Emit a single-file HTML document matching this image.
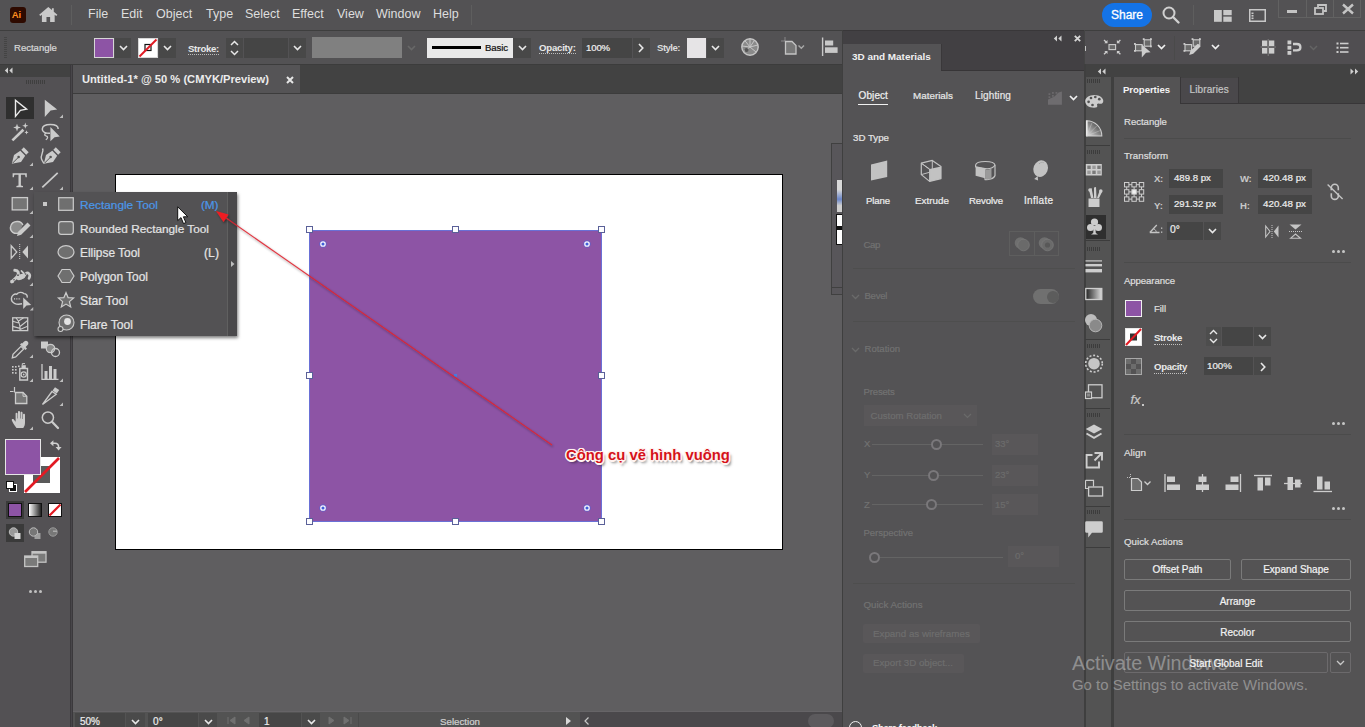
<!DOCTYPE html>
<html>
<head>
<meta charset="utf-8">
<title>Illustrator</title>
<style>
*{box-sizing:border-box;margin:0;padding:0}
html,body{width:1365px;height:727px;overflow:hidden;background:#535353}
body{font-family:"Liberation Sans",sans-serif;font-size:10px;color:#dcdcdc;position:relative}
.a{position:absolute}
.t{position:absolute;white-space:nowrap;line-height:16px;height:16px;-webkit-text-stroke:0.22px currentColor}
svg{position:absolute;overflow:visible}
.dd{position:absolute;background:#484848}
.inp{position:absolute;background:#454545}
</style>
</head>
<body>
<!-- p00_base -->
<div class="a" style="left:0px;top:0px;width:1365px;height:30px;background:#535254;"></div>
<div class="a" style="left:0px;top:30px;width:1365px;height:1px;background:#3e3e3e;"></div>
<div class="a" style="left:0px;top:31px;width:1365px;height:33px;background:#535254;"></div>
<div class="a" style="left:0px;top:64px;width:1365px;height:1.3px;background:#3c3c3c;"></div>
<div class="a" style="left:73px;top:94px;width:770px;height:619px;background:#5f5e60;"></div>
<div class="a" style="left:71px;top:65px;width:772px;height:28px;background:#424242;"></div>
<div class="a" style="left:73px;top:65.3px;width:227px;height:27.7px;background:#555456;"></div>
<div class="a" style="left:73px;top:93px;width:770px;height:1px;background:#3c3c3c;"></div>
<div class="a" style="left:115px;top:174px;width:668px;height:376px;background:#fff;border:1px solid #000"></div>
<!-- p10_menu -->
<div class="a" style="left:9.5px;top:6.5px;width:16px;height:16px;background:#2e0a00;border-radius:3px"></div>
<div class="t" style="left:11.8px;top:6.7px;font-size:9.5px;color:#ff8f1f;font-weight:bold;-webkit-text-stroke:0;letter-spacing:-0.2px;">Ai</div>
<svg style="left:38.7px;top:7.4px" width="18.6" height="15.5" viewBox="0 0 20 17"><path d="M10 0 L0 8.6 L1.3 10 L3 8.6 V16.5 H8 V11 H12 V16.5 H17 V8.6 L18.7 10 L20 8.6 L16 5.1 V1.5 H14 V3.4 Z" fill="#c9c9c9"/></svg>
<div class="a" style="left:71px;top:5px;width:1px;height:20px;background:#5e5e5e;"></div>
<div class="t" style="left:88px;top:6.0px;font-size:12.5px;color:#dedede;-webkit-text-stroke:0;">File</div>
<div class="t" style="left:121px;top:6.0px;font-size:12.5px;color:#dedede;-webkit-text-stroke:0;">Edit</div>
<div class="t" style="left:156px;top:6.0px;font-size:12.5px;color:#dedede;-webkit-text-stroke:0;">Object</div>
<div class="t" style="left:206px;top:6.0px;font-size:12.5px;color:#dedede;-webkit-text-stroke:0;">Type</div>
<div class="t" style="left:245px;top:6.0px;font-size:12.5px;color:#dedede;-webkit-text-stroke:0;">Select</div>
<div class="t" style="left:292px;top:6.0px;font-size:12.5px;color:#dedede;-webkit-text-stroke:0;">Effect</div>
<div class="t" style="left:337px;top:6.0px;font-size:12.5px;color:#dedede;-webkit-text-stroke:0;">View</div>
<div class="t" style="left:376px;top:6.0px;font-size:12.5px;color:#dedede;-webkit-text-stroke:0;">Window</div>
<div class="t" style="left:433px;top:6.0px;font-size:12.5px;color:#dedede;-webkit-text-stroke:0;">Help</div>
<div class="a" style="left:471px;top:5px;width:1px;height:20px;background:#5e5e5e;"></div>
<div class="a" style="left:1102px;top:3px;width:50px;height:24px;background:#1473e6;border-radius:12px"></div>
<div class="t" style="left:1102px;width:50px;text-align:center;top:7.0px;font-size:12px;color:#fff;-webkit-text-stroke:0.3px #fff;">Share</div>
<svg style="left:1162px;top:6px" width="18" height="18" viewBox="0 0 18 18"><circle cx="7" cy="7" r="5.5" fill="none" stroke="#d0d0d0" stroke-width="2"/><path d="M11 11 L16.5 16.5" stroke="#d0d0d0" stroke-width="2.4" stroke-linecap="round"/></svg>
<div class="a" style="left:1193px;top:5px;width:1px;height:20px;background:#5e5e5e;"></div>
<svg style="left:1213.7px;top:9.5px" width="18" height="12" viewBox="0 0 18 12"><rect x="0" y="0" width="7.8" height="11.8" fill="#c8c8c8"/><rect x="9.3" y="0" width="8.4" height="5.2" fill="#c8c8c8"/><rect x="9.3" y="6.6" width="8.4" height="5.2" fill="#c8c8c8"/></svg>
<svg style="left:1249px;top:9px" width="17" height="13" viewBox="0 0 17 13"><rect x="0.75" y="0.75" width="15.5" height="11.5" fill="none" stroke="#c8c8c8" stroke-width="1.5"/><rect x="2.5" y="3.5" width="2" height="1.6" fill="#c8c8c8"/><rect x="2.5" y="6" width="2" height="1.6" fill="#c8c8c8"/><rect x="2.5" y="8.5" width="2" height="1.6" fill="#c8c8c8"/></svg>
<div class="a" style="left:1278px;top:0px;width:83px;height:18px;background:transparent;border:1px solid #626262;border-top:none"></div>
<div class="a" style="left:1306px;top:0px;width:1px;height:18px;background:#626262;"></div>
<div class="a" style="left:1333px;top:0px;width:1px;height:18px;background:#626262;"></div>
<div class="a" style="left:1287px;top:10px;width:10px;height:3px;background:#c4c4c4;"></div>
<svg style="left:1314px;top:4px" width="13" height="11" viewBox="0 0 13 11"><path d="M4 3 V1 H12 V7 H9.5" fill="none" stroke="#c4c4c4" stroke-width="1.8"/><rect x="1" y="4" width="8" height="6" fill="none" stroke="#c4c4c4" stroke-width="1.8"/></svg>
<svg style="left:1342px;top:4px" width="12" height="10" viewBox="0 0 12 10"><path d="M1 0.5 L11 9.5 M11 0.5 L1 9.5" stroke="#c4c4c4" stroke-width="2.4"/></svg>
<!-- p20_ctrl -->
<div class="a" style="left:4px;top:37px;width:3px;height:22px;background:repeating-linear-gradient(to bottom,#444 0,#444 1px,transparent 1px,transparent 2px);"></div>
<div class="t" style="left:14px;top:40.0px;font-size:9.6px;color:#d8d8d8;letter-spacing:-0.03px;">Rectangle</div>
<div class="a" style="left:94px;top:38px;width:20px;height:20px;background:#8d54a5;border:1px solid #d6d6d6"></div>
<div class="dd" style="left:115px;top:38px;width:16px;height:20px"></div><svg style="left:119px;top:45px" width="9" height="6" viewBox="0 0 9 6"><path d="M1 1 L4.5 4.5 L8 1" fill="none" stroke="#e8e8e8" stroke-width="1.6"/></svg>
<div class="a" style="left:138px;top:38px;width:20px;height:20px;background:#fff;border:1px solid #d6d6d6"></div>
<svg style="left:138px;top:38px" width="20" height="20" viewBox="0 0 20 20"><rect x="7" y="6.5" width="6" height="6" fill="none" stroke="#111" stroke-width="1.2"/><path d="M1.5 18.5 L18.5 1.5" stroke="#e01b24" stroke-width="2"/></svg>
<div class="dd" style="left:159px;top:38px;width:17px;height:20px"></div><svg style="left:163px;top:45px" width="9" height="6" viewBox="0 0 9 6"><path d="M1 1 L4.5 4.5 L8 1" fill="none" stroke="#e8e8e8" stroke-width="1.6"/></svg>
<div class="t" style="left:188px;top:40.8px;font-size:9.6px;color:#e8e8e8;font-weight:bold;-webkit-text-stroke:0;letter-spacing:-0.30px;border-bottom:1px dotted #bbb;height:14px;line-height:15px;">Stroke:</div>
<div class="dd" style="left:226px;top:38px;width:17px;height:20px"></div><svg style="left:230px;top:40px" width="9" height="16" viewBox="0 0 9 16"><path d="M1 5 L4.5 1.5 L8 5 M1 11 L4.5 14.5 L8 11" fill="none" stroke="#e8e8e8" stroke-width="1.5"/></svg>
<div class="inp" style="left:244px;top:38px;width:44px;height:20px"></div><div class="dd" style="left:289px;top:38px;width:17px;height:20px"></div><svg style="left:293px;top:45px" width="9" height="6" viewBox="0 0 9 6"><path d="M1 1 L4.5 4.5 L8 1" fill="none" stroke="#e8e8e8" stroke-width="1.6"/></svg>
<div class="a" style="left:312px;top:37px;width:90px;height:21px;background:#808080;"></div>
<svg style="left:407px;top:45px" width="9" height="6" viewBox="0 0 9 6"><path d="M1 1 L4.5 4.5 L8 1" fill="none" stroke="#686868" stroke-width="1.6"/></svg>
<div class="a" style="left:427px;top:38px;width:86px;height:20px;background:#e9e9e9;"></div>
<div class="a" style="left:432px;top:46px;width:49px;height:3px;background:#000;"></div>
<div class="t" style="left:485px;top:40.0px;font-size:9.6px;color:#111;letter-spacing:-0.10px;">Basic</div>
<div class="dd" style="left:513px;top:38px;width:18px;height:20px"></div><svg style="left:518px;top:45px" width="9" height="6" viewBox="0 0 9 6"><path d="M1 1 L4.5 4.5 L8 1" fill="none" stroke="#e8e8e8" stroke-width="1.6"/></svg>
<div class="t" style="left:539px;top:40.3px;font-size:9.6px;color:#e8e8e8;font-weight:bold;-webkit-text-stroke:0;letter-spacing:-0.21px;border-bottom:1px dotted #bbb;height:14px;line-height:15px;">Opacity:</div>
<div class="inp" style="left:582px;top:38px;width:50px;height:20px"></div><div class="t" style="left:586px;top:39.5px;font-size:9.6px;color:#f0f0f0;letter-spacing:-0.14px;">100%</div>
<div class="dd" style="left:633px;top:38px;width:17px;height:20px"></div><svg style="left:638px;top:43px" width="6" height="10" viewBox="0 0 6 10"><path d="M1 1 L4.8 5 L1 9" fill="none" stroke="#e8e8e8" stroke-width="1.6"/></svg>
<div class="t" style="left:657px;top:39.5px;font-size:9.6px;color:#dcdcdc;font-weight:bold;-webkit-text-stroke:0;letter-spacing:-0.52px;">Style:</div>
<div class="a" style="left:687px;top:38px;width:19px;height:20px;background:#e6e4e6;"></div>
<div class="dd" style="left:707px;top:38px;width:17px;height:20px"></div><svg style="left:711px;top:45px" width="9" height="6" viewBox="0 0 9 6"><path d="M1 1 L4.5 4.5 L8 1" fill="none" stroke="#e8e8e8" stroke-width="1.6"/></svg>
<svg style="left:741px;top:38px" width="18" height="18" viewBox="0 0 18 18"><circle cx="9" cy="9" r="8.2" fill="#8a8a8a" stroke="#c6c6c6" stroke-width="1.4"/><path d="M9 1 L9 9 L2.5 13.5 M9 9 L15 14 M9 9 L16.8 7 M9 9 L13.5 2.3 M9 9 L4 2.8 M9 9 L1 8" stroke="#c6c6c6" stroke-width="1" fill="none"/><circle cx="5.5" cy="12" r="2" fill="#555"/></svg>
<svg style="left:781px;top:37px" width="30" height="20" viewBox="0 0 30 20"><path d="M4 0.5 V4 M0.5 4 H4" stroke="#bdbdbd" stroke-width="1" stroke-dasharray="1 1" fill="none"/><path d="M4.5 4.5 H11 L15 8.5 V17 H4.5 Z" fill="#777" stroke="#c4c4c4" stroke-width="1.3"/><path d="M17.5 8.5 L20.3 11.3 L23 8.5" fill="none" stroke="#a8a8a8" stroke-width="1.4"/></svg>
<svg style="left:821px;top:37px" width="18" height="22" viewBox="0 0 18 22"><path d="M1.6 0.5 V19" stroke="#c8c8c8" stroke-width="1.4"/><rect x="4" y="3.5" width="8.2" height="5" fill="#c8c8c8"/><rect x="4" y="10.3" width="12.6" height="5.6" fill="#c8c8c8"/></svg>
<!-- p30_canvas -->
<div class="t" style="left:82px;top:71.0px;font-size:11.16px;color:#ececec;font-weight:bold;-webkit-text-stroke:0;">Untitled-1* @ 50 % (CMYK/Preview)</div>
<svg style="left:286px;top:75.5px" width="8" height="8" viewBox="0 0 8 8"><path d="M1 1 L7 7 M7 1 L1 7" stroke="#e6e6e6" stroke-width="2"/></svg>
<div class="a" style="left:309px;top:229.5px;width:292.5px;height:292.3px;background:#8d54a5;border:1px solid #6a70d6"></div>
<div class="a" style="left:305.7px;top:226.2px;width:7px;height:7px;background:#fdfdff;border:1px solid #5a6098"></div>
<div class="a" style="left:305.7px;top:372.2px;width:7px;height:7px;background:#fdfdff;border:1px solid #5a6098"></div>
<div class="a" style="left:305.7px;top:518.2px;width:7px;height:7px;background:#fdfdff;border:1px solid #5a6098"></div>
<div class="a" style="left:452.2px;top:226.2px;width:7px;height:7px;background:#fdfdff;border:1px solid #5a6098"></div>
<div class="a" style="left:452.2px;top:518.2px;width:7px;height:7px;background:#fdfdff;border:1px solid #5a6098"></div>
<div class="a" style="left:598.2px;top:226.2px;width:7px;height:7px;background:#fdfdff;border:1px solid #5a6098"></div>
<div class="a" style="left:598.2px;top:372.2px;width:7px;height:7px;background:#fdfdff;border:1px solid #5a6098"></div>
<div class="a" style="left:598.2px;top:518.2px;width:7px;height:7px;background:#fdfdff;border:1px solid #5a6098"></div>
<div class="a" style="left:454px;top:374px;width:3px;height:3px;background:#4a7be0;"></div>
<svg style="left:319px;top:240px" width="8" height="8" viewBox="0 0 8 8"><circle cx="4" cy="4" r="3.3" fill="none" stroke="#4f63d8" stroke-width="0.7"/><circle cx="4" cy="4" r="2.2" fill="#3f5fd8" stroke="#f4f4ff" stroke-width="1.3"/></svg>
<svg style="left:582.5px;top:240px" width="8" height="8" viewBox="0 0 8 8"><circle cx="4" cy="4" r="3.3" fill="none" stroke="#4f63d8" stroke-width="0.7"/><circle cx="4" cy="4" r="2.2" fill="#3f5fd8" stroke="#f4f4ff" stroke-width="1.3"/></svg>
<svg style="left:319px;top:503.5px" width="8" height="8" viewBox="0 0 8 8"><circle cx="4" cy="4" r="3.3" fill="none" stroke="#4f63d8" stroke-width="0.7"/><circle cx="4" cy="4" r="2.2" fill="#3f5fd8" stroke="#f4f4ff" stroke-width="1.3"/></svg>
<svg style="left:582.5px;top:503.5px" width="8" height="8" viewBox="0 0 8 8"><circle cx="4" cy="4" r="3.3" fill="none" stroke="#4f63d8" stroke-width="0.7"/><circle cx="4" cy="4" r="2.2" fill="#3f5fd8" stroke="#f4f4ff" stroke-width="1.3"/></svg>
<!-- p40_tools -->
<div class="a" style="left:0px;top:65px;width:70px;height:662px;background:#535154;"></div>
<div class="a" style="left:0px;top:65px;width:70px;height:12px;background:#424242;"></div>
<div class="a" style="left:70px;top:65px;width:1px;height:662px;background:#3b393c;"></div>
<div class="a" style="left:71px;top:65px;width:1px;height:662px;background:#48464a;"></div>
<div class="a" style="left:72px;top:65px;width:1px;height:662px;background:#3b393c;"></div>
<svg style="left:4.2px;top:67.3px" width="9" height="7" viewBox="0 0 9 7"><path d="M4 0.5 L0.8 3.5 L4 6.5 Z M8.5 0.5 L5.3 3.5 L8.5 6.5 Z" fill="#d0d0d0"/></svg>
<div class="a" style="left:26px;top:80px;width:20px;height:4px;background:repeating-linear-gradient(to right,#3f3f3f 0,#3f3f3f 1px,transparent 1px,transparent 2px);"></div>
<div class="a" style="left:6px;top:97px;width:28px;height:22px;background:#2f2f2f;"></div>
<svg style="left:0px;top:0px" width="72" height="727" viewBox="0 0 72 727"><path d="M15.5 100.3 L26.6 109.2 L20.4 110.4 L15.5 116.4 Z" fill="none" stroke="#ececec" stroke-width="1.4" stroke-linejoin="miter"/><path d="M44.8 99.8 L57.2 109.6 L50.6 110.6 L44.8 117 Z" fill="#cbcbcb"/><path d="M63.0 114.5 V118.0 H59.5 Z" fill="#bdbdbd"/><path d="M12.4 140.4 L23.4 129.8" stroke="#cbcbcb" stroke-width="2.6"/><path d="M17 123.8 L18 126.6 L20.8 127.6 L18 128.6 L17 131.4 L16 128.6 L13.2 127.6 L16 126.6 Z" fill="#cbcbcb"/><path d="M25.3 122.6 L26.1 124.9 L28.4 125.7 L26.1 126.5 L25.3 128.8 L24.5 126.5 L22.2 125.7 L24.5 124.9 Z" fill="#cbcbcb"/><path d="M26.5 130.3 L27.1 131.8 L28.6 132.4 L27.1 133 L26.5 134.5 L25.9 133 L24.4 132.4 L25.9 131.8 Z" fill="#cbcbcb"/><path d="M50 133.2 C45.5 133.6 42 131.8 42.3 129 C42.6 126 46 124.6 50.3 124.6 C55 124.6 58.2 126.3 58.2 129" fill="none" stroke="#cbcbcb" stroke-width="1.5"/><path d="M46.5 132.8 C44.5 133.3 44 135.3 46 135.8 C48.3 136.3 48 138.5 45.8 139.8" fill="none" stroke="#cbcbcb" stroke-width="1.3"/><path d="M50.4 127 L59.8 136.6 L54.6 137.2 L50.4 141.2 Z" fill="#cbcbcb"/><path d="M11.8 163.8 L14 155 L20.3 150.8 L25.2 155.7 L21 162 Z" fill="#cbcbcb"/><path d="M21.3 149.8 L23.8 147.3 L28.7 152.2 L26.2 154.7 Z" fill="#cbcbcb"/><path d="M12.5 163.2 L18 157.7" stroke="#535353" stroke-width="1"/><circle cx="18.6" cy="157" r="1.3" fill="#535353"/><path d="M33.0 162.5 V166.0 H29.5 Z" fill="#bdbdbd"/><path d="M43.8 163.8 L46 155 L52.3 150.8 L57.2 155.7 L53 162 Z" fill="#cbcbcb"/><path d="M53.3 149.8 L55.8 147.3 L60.7 152.2 L58.2 154.7 Z" fill="#cbcbcb"/><path d="M44.5 163.2 L50 157.7" stroke="#535353" stroke-width="1"/><circle cx="50.6" cy="157" r="1.3" fill="#535353"/><path d="M42.5 148.5 C44.5 151 40 155 41.5 159 C42.2 161 43.5 162.5 44 163.5" fill="none" stroke="#cbcbcb" stroke-width="1.4"/><path d="M12.6 173.2 H26.8 V177.2 H25.6 L25 174.8 H20.9 V185.4 L23 186 V187.2 H16.4 V186 L18.5 185.4 V174.8 H14.4 L13.8 177.2 H12.6 Z" fill="#cbcbcb"/><path d="M33.0 186.5 V190.0 H29.5 Z" fill="#bdbdbd"/><path d="M42.3 187.3 L57.7 172.9" stroke="#cbcbcb" stroke-width="1.7"/><path d="M63.0 186.5 V190.0 H59.5 Z" fill="#bdbdbd"/><rect x="12.2" y="197.6" width="15.3" height="12.3" fill="#757575" stroke="#cbcbcb" stroke-width="1.3"/><path d="M33.0 210.5 V214.0 H29.5 Z" fill="#bdbdbd"/><path d="M19 233 C14 234.5 10.2 231.5 10.4 227.5 C10.6 223.5 14 221.3 17.5 221.5 C20.5 221.7 22.3 223.2 22.8 225" fill="#8b8b8b" stroke="#cbcbcb" stroke-width="1.4"/><path d="M17 236 L18.2 231.8 L27.5 222.5 L30.5 225.5 L21.2 234.8 Z" fill="#cbcbcb"/><path d="M33.0 234.5 V238.0 H29.5 Z" fill="#bdbdbd"/><path d="M11.2 245.8 L16.8 252 L11.2 258.2 Z" fill="none" stroke="#cbcbcb" stroke-width="1.3"/><path d="M19.7 244 V260" stroke="#cbcbcb" stroke-width="1" stroke-dasharray="1 1"/><path d="M28 245.5 L22.3 252 L28 258.5 Z" fill="#cbcbcb"/><path d="M33.0 258.5 V262.0 H29.5 Z" fill="#bdbdbd"/><path d="M14.8 270.3 C18.2 270.6 19.4 273.2 17.6 276 C16 278.5 13.6 279.6 11.8 281.8" fill="none" stroke="#cbcbcb" stroke-width="3" stroke-linecap="round"/><path d="M17.6 276.4 C20.5 279 23.6 278 24.8 275.2 C25.8 272.8 27.6 272.3 28.9 273.6 C30.3 275 29.9 276.8 29 278.3" fill="none" stroke="#cbcbcb" stroke-width="2.6" stroke-linecap="round"/><path d="M21.5 271 L23.5 273.2" stroke="#cbcbcb" stroke-width="1.8" stroke-linecap="round"/><ellipse cx="20.6" cy="277" rx="4.6" ry="2.7" transform="rotate(-22 20.6 277)" fill="#cbcbcb"/><rect x="10.6" y="280" width="3" height="3" fill="#cbcbcb"/><circle cx="18" cy="275.2" r="0.9" fill="#535154"/><circle cx="14" cy="279.8" r="0.8" fill="#535154"/><circle cx="25.6" cy="274" r="0.8" fill="#535154"/><path d="M33.0 282.5 V286.0 H29.5 Z" fill="#bdbdbd"/><path d="M22 303.8 C16 305.2 11.2 302.8 11.4 298.6 C11.6 295.4 14.2 293.6 16.8 294.2 C18 292 22 291.8 23.8 293.6 C26.2 293.6 27.6 295.4 27.2 297.6" fill="none" stroke="#cbcbcb" stroke-width="1.4"/><path d="M14 298.8 H21" stroke="#cbcbcb" stroke-width="1.3" stroke-dasharray="1.1 1.2"/><path d="M23.2 297.4 L31.2 304.9 L26.5 305.5 L23.2 309 Z" fill="#cbcbcb"/><path d="M33.3 307 V310.5 H29.8 Z" fill="#bdbdbd"/><rect x="12.7" y="317.8" width="15" height="12.8" fill="none" stroke="#cbcbcb" stroke-width="1.3"/><path d="M20 330.5 C20.3 325 19 321 16 317.8 M20 326.5 L27.6 320.5 M19.6 323.3 L12.7 321.3 M20 328.4 L12.7 326.4 M18.6 321 L23.5 317.8 M20 329.4 L27.6 326.2" fill="none" stroke="#cbcbcb" stroke-width="1.1"/><path d="M12.3 357.8 L13 354.3 L21 346.3 L23.7 349 L15.7 357 Z" fill="none" stroke="#cbcbcb" stroke-width="1.3"/><path d="M20 344.5 L25.5 350 L27 348.5 L25.6 347.1 L27.6 345 C28.6 344 28.6 342.5 27.6 341.5 C26.6 340.5 25.2 340.5 24.2 341.5 L22.1 343.6 L21.5 343 Z" fill="#cbcbcb"/><path d="M33.0 354.5 V358.0 H29.5 Z" fill="#bdbdbd"/><rect x="41" y="341.5" width="7" height="7" fill="#cbcbcb"/><circle cx="50.5" cy="348.5" r="4.2" fill="#8a8a8a" stroke="#cbcbcb" stroke-width="1.2"/><circle cx="55.5" cy="352.5" r="4" fill="none" stroke="#cbcbcb" stroke-width="1.3"/><path d="M19.8 368.5 H27.5 V380 H19.8 Z" fill="none" stroke="#cbcbcb" stroke-width="1.4"/><circle cx="23.7" cy="374.5" r="2.6" fill="none" stroke="#cbcbcb" stroke-width="1.2"/><circle cx="23.7" cy="374.5" r="0.9" fill="#cbcbcb"/><path d="M21.5 368 V365.2 H25.8 V368 Z" fill="#cbcbcb"/><path d="M22.3 365 V363.6 H25 " stroke="#cbcbcb" stroke-width="1" fill="none"/><rect x="12" y="366" width="1.6" height="1.6" fill="#cbcbcb"/><rect x="15" y="366" width="1.6" height="1.6" fill="#cbcbcb"/><rect x="18" y="365.5" width="1.6" height="1.6" fill="#cbcbcb"/><rect x="12" y="369" width="1.6" height="1.6" fill="#cbcbcb"/><rect x="15" y="369" width="1.6" height="1.6" fill="#cbcbcb"/><rect x="12" y="372" width="1.6" height="1.6" fill="#cbcbcb"/><rect x="15" y="372.2" width="1.6" height="1.6" fill="#cbcbcb"/><path d="M33.0 378.5 V382.0 H29.5 Z" fill="#bdbdbd"/><path d="M42 364 V379.3 H58.5" fill="none" stroke="#cbcbcb" stroke-width="1.3"/><rect x="44.5" y="371" width="3" height="8" fill="#cbcbcb"/><rect x="49" y="366" width="3" height="13" fill="#cbcbcb"/><rect x="53.5" y="369" width="3" height="10" fill="#cbcbcb"/><path d="M63.0 378.5 V382.0 H59.5 Z" fill="#bdbdbd"/><path d="M14.5 387 V392.5 M10 391.5 H13.5" stroke="#cbcbcb" stroke-width="1.2"/><path d="M15.5 392.5 H23 L26.8 396.3 V403.5 H15.5 Z" fill="#777" stroke="#cbcbcb" stroke-width="1.3"/><path d="M23 392.5 V396.3 H26.8" fill="none" stroke="#cbcbcb" stroke-width="1"/><path d="M42.5 404.5 L52 391.5 L56.2 394.3 Z" fill="none" stroke="#cbcbcb" stroke-width="1.3"/><path d="M52.6 390.6 L55 387.2 L59.2 390 L56.8 393.4 Z" fill="#cbcbcb"/><path d="M63.0 402.5 V406.0 H59.5 Z" fill="#bdbdbd"/><path d="M16.5 428 C14.5 425.5 12.5 422.5 11.8 420.2 C11.5 419 13 418.4 13.8 419.4 L15.6 421.8 V413.6 C15.6 412.3 17.4 412.3 17.5 413.6 V418.5 L18 418.5 V411.9 C18 410.6 19.9 410.6 20 411.9 V418.5 L20.5 418.5 V412.8 C20.5 411.5 22.4 411.5 22.5 412.8 V419 L23 419 V414.8 C23 413.5 24.9 413.5 25 414.8 V422.5 C25 425 24.3 426.5 23.3 428 Z" fill="#cbcbcb"/><path d="M33.0 426.5 V430.0 H29.5 Z" fill="#bdbdbd"/><circle cx="47.9" cy="417.6" r="5.6" fill="none" stroke="#cbcbcb" stroke-width="1.5"/><path d="M52 421.8 L58 428" stroke="#cbcbcb" stroke-width="2.3" stroke-linecap="round"/></svg>
<div class="a" style="left:24px;top:457px;width:36px;height:36px;background:#fff;border:1px solid #fff"></div>
<div class="a" style="left:33px;top:466px;width:17px;height:17px;background:#5a5a5a;"></div>
<svg style="left:24px;top:457px" width="36" height="36" viewBox="0 0 36 36"><path d="M1 35 L35 1" stroke="#e21a23" stroke-width="2.6"/></svg>
<div class="a" style="left:5px;top:439px;width:36px;height:36px;background:#8d54a5;border:1px solid #e6e6e6"></div>
<svg style="left:50px;top:440px" width="11" height="11" viewBox="0 0 11 11"><path d="M2 3.2 H5 C7.5 3.2 8.6 4.5 8.6 7" fill="none" stroke="#d0d0d0" stroke-width="1.6"/><path d="M0 3.2 L3.4 0.2 V6.2 Z M8.6 10.5 L5.6 7 H11.6 Z" fill="#d0d0d0"/></svg>
<div class="a" style="left:9px;top:484px;width:8px;height:8px;background:#111;border:1px solid #fff"></div>
<div class="a" style="left:6px;top:481px;width:8px;height:8px;background:#fff;border:1.5px solid #111"></div>
<div class="a" style="left:6px;top:501px;width:18px;height:18px;background:#3a3a3a;"></div>
<div class="a" style="left:8px;top:503px;width:14px;height:14px;background:#8d54a5;border:1px solid #111"></div>
<div class="a" style="left:28px;top:503px;width:14px;height:14px;background:linear-gradient(to right,#fff,#222);border:1px solid #111"></div>
<div class="a" style="left:48px;top:503px;width:14px;height:14px;background:#fff;border:1px solid #111"></div>
<svg style="left:48px;top:503px" width="14" height="14" viewBox="0 0 14 14"><path d="M1.5 12.5 L12.5 1.5" stroke="#e21a23" stroke-width="2.2"/></svg>
<div class="a" style="left:6px;top:524px;width:18px;height:18px;background:#3a3a3a;"></div>
<svg style="left:8px;top:526px" width="14" height="14" viewBox="0 0 14 14"><circle cx="5.5" cy="6" r="4.2" fill="#9a9a9a" stroke="#bdbdbd" stroke-width="1"/><rect x="6.5" y="7" width="6" height="6" fill="#d6d6d6"/></svg>
<svg style="left:28px;top:526px" width="14" height="14" viewBox="0 0 14 14"><rect x="6.5" y="7" width="6" height="6" fill="#9e9e9e"/><circle cx="5.5" cy="6" r="4.2" fill="#777" stroke="#bdbdbd" stroke-width="1"/></svg>
<svg style="left:47px;top:526px" width="14" height="14" viewBox="0 0 14 14"><circle cx="6" cy="6" r="4.2" fill="#777" stroke="#9a9a9a" stroke-width="1"/><path d="M6 6 h4 v-1.5 h-4z" fill="#aaa"/></svg>
<svg style="left:24px;top:551px" width="23" height="17" viewBox="0 0 23 17"><rect x="8" y="0.7" width="14" height="10.5" fill="#7a7a7a" stroke="#c4c4c4" stroke-width="1.3"/><rect x="8" y="0.7" width="14" height="2" fill="#c4c4c4"/><rect x="0.7" y="5" width="13" height="10.5" fill="#7a7a7a" stroke="#c4c4c4" stroke-width="1.3"/><rect x="0.7" y="5" width="13" height="2" fill="#c4c4c4"/></svg>
<div class="a" style="left:29px;top:590px;width:3px;height:3px;background:#c0c0c0;border-radius:50%"></div>
<div class="a" style="left:34px;top:590px;width:3px;height:3px;background:#c0c0c0;border-radius:50%"></div>
<div class="a" style="left:39px;top:590px;width:3px;height:3px;background:#c0c0c0;border-radius:50%"></div>
<!-- p50_flyout -->
<div class="a" style="left:34px;top:192px;width:203px;height:144px;background:#535254;box-shadow:1px 2px 3px rgba(0,0,0,.5)"></div>
<div class="a" style="left:227.5px;top:192px;width:9.5px;height:144px;background:#4a494b;"></div>
<div class="a" style="left:226.8px;top:192px;width:1px;height:144px;background:#606060;"></div>
<svg style="left:230.5px;top:261px" width="4" height="6" viewBox="0 0 4 6"><path d="M0 0 L3.5 3 L0 6 Z" fill="#bdbdbd"/></svg>
<div class="a" style="left:43px;top:202px;width:4px;height:4px;background:#c8c8c8;"></div>
<div class="t" style="left:80px;top:196.5px;font-size:11.82px;color:#4b97e8;">Rectangle Tool</div>
<div class="t" style="left:201px;top:196.5px;font-size:11.75px;color:#4b97e8;letter-spacing:-0.04px;">(M)</div>
<div class="t" style="left:80px;top:220.5px;font-size:11.8px;color:#e4e4e4;">Rounded Rectangle Tool</div>
<div class="t" style="left:80px;top:244.5px;font-size:11.9px;color:#e4e4e4;">Ellipse Tool</div>
<div class="t" style="left:204px;top:244.5px;font-size:12.15px;color:#e4e4e4;letter-spacing:0.05px;">(L)</div>
<div class="t" style="left:80px;top:268.5px;font-size:11.91px;color:#e4e4e4;">Polygon Tool</div>
<div class="t" style="left:80px;top:292.5px;font-size:12.15px;color:#e4e4e4;letter-spacing:0.03px;">Star Tool</div>
<div class="t" style="left:80px;top:316.5px;font-size:12.12px;color:#e4e4e4;">Flare Tool</div>
<svg style="left:0px;top:0px" width="240" height="340" viewBox="0 0 240 340"><rect x="58.7" y="197.7" width="14.6" height="12.6" fill="#6f6f6f" stroke="#cbcbcb" stroke-width="1.2"/><rect x="58.7" y="221.7" width="14.6" height="12.6" rx="2.5" fill="#6f6f6f" stroke="#cbcbcb" stroke-width="1.2"/><ellipse cx="66" cy="252" rx="8" ry="6.3" fill="#6f6f6f" stroke="#cbcbcb" stroke-width="1.2"/><path d="M58 276 L62 269.5 H70 L74 276 L70 282.5 H62 Z" fill="#6f6f6f" stroke="#cbcbcb" stroke-width="1.2"/><path d="M66 292.5 L68.1 297.6 L73.6 298 L69.4 301.6 L70.7 307 L66 304.1 L61.3 307 L62.6 301.6 L58.4 298 L63.9 297.6 Z" fill="#6f6f6f" stroke="#cbcbcb" stroke-width="1.2"/><circle cx="66.5" cy="322.5" r="7.5" fill="#6f6f6f" stroke="#cbcbcb" stroke-width="1.1"/><circle cx="67.5" cy="321.5" r="3.4" fill="#e4e4e4"/><circle cx="60.5" cy="329" r="2.5" fill="#535353" stroke="#cbcbcb" stroke-width="1.1"/></svg>
<!-- p60_status -->
<div class="a" style="left:73px;top:712px;width:770px;height:15px;background:#535353;"></div>
<div class="a" style="left:73px;top:711px;width:770px;height:1px;background:#666467;"></div>
<div class="a" style="left:580px;top:712px;width:263px;height:15px;background:#4a484b;"></div>
<div class="a" style="left:75px;top:713px;width:50px;height:14px;background:#464646;"></div>
<div class="t" style="left:80px;top:714.0px;font-size:9.99px;color:#ececec;">50%</div>
<div class="a" style="left:126px;top:713px;width:19px;height:14px;background:#4a4a4a;"></div>
<svg style="left:131px;top:719px" width="9" height="6" viewBox="0 0 9 6"><path d="M1 1 L4.5 4.5 L8 1" fill="none" stroke="#e8e8e8" stroke-width="1.6"/></svg>
<div class="a" style="left:148px;top:713px;width:50px;height:14px;background:#464646;"></div>
<div class="t" style="left:153px;top:714.0px;font-size:10.0px;color:#ececec;letter-spacing:0.22px;">0°</div>
<div class="a" style="left:199px;top:713px;width:18px;height:14px;background:#4a4a4a;"></div>
<svg style="left:203.5px;top:719px" width="9" height="6" viewBox="0 0 9 6"><path d="M1 1 L4.5 4.5 L8 1" fill="none" stroke="#e8e8e8" stroke-width="1.6"/></svg>
<svg style="left:227px;top:717px" width="24" height="8" viewBox="0 0 24 8"><path d="M1 0 V7 M8 0 L3 3.5 L8 7 Z M22 0 L17 3.5 L22 7 Z" fill="#707070" stroke="#707070" stroke-width="1"/></svg>
<div class="a" style="left:259px;top:713px;width:42px;height:14px;background:#464646;"></div>
<div class="t" style="left:264px;top:714.0px;font-size:10px;color:#ececec;">1</div>
<div class="a" style="left:302px;top:713px;width:18px;height:14px;background:#4a4a4a;"></div>
<svg style="left:306.5px;top:719px" width="9" height="6" viewBox="0 0 9 6"><path d="M1 1 L4.5 4.5 L8 1" fill="none" stroke="#e8e8e8" stroke-width="1.6"/></svg>
<svg style="left:328px;top:717px" width="24" height="8" viewBox="0 0 24 8"><path d="M1 0 L6 3.5 L1 7 Z M16 0 L21 3.5 L16 7 Z M23 0 V7" fill="#707070" stroke="#707070" stroke-width="1"/></svg>
<div class="a" style="left:358px;top:713px;width:1px;height:14px;background:#4a4a4a;"></div>
<div class="t" style="left:440px;top:713.5px;font-size:9.72px;color:#d0d0d0;">Selection</div>
<svg style="left:566px;top:717px" width="5" height="8" viewBox="0 0 5 8"><path d="M0 0 L5 4 L0 8 Z" fill="#d8d8d8"/></svg>
<svg style="left:584px;top:717px" width="5" height="8" viewBox="0 0 5 8"><path d="M4.5 0.5 L1 4 L4.5 7.5" fill="none" stroke="#c8c8c8" stroke-width="1.2"/></svg>
<div class="a" style="left:808px;top:713.5px;width:26px;height:14px;background:#5c5a5d;border-radius:7px"></div>
<!-- p70_p3d -->
<div class="a" style="left:831px;top:143px;width:12px;height:152px;background:#58565a;border:1px solid #404040"></div>
<div class="a" style="left:831px;top:287px;width:12px;height:1px;background:#404040;"></div>
<div class="a" style="left:837px;top:180px;width:5px;height:32px;background:linear-gradient(to bottom,#d8d8d8,#d8d8d8 30%,#6b86c8 60%,#d0d0d0 80%);"></div>
<div class="a" style="left:836px;top:214px;width:7px;height:31px;background:#fff;border:1px solid #111"></div>
<div class="a" style="left:837px;top:226px;width:6px;height:4px;background:#111;"></div>
<div class="a" style="left:842px;top:30px;width:243px;height:697px;background:#545355;border-left:1px solid #3f3f3f"></div>
<div class="a" style="left:843px;top:30px;width:242px;height:40.5px;background:#424043;"></div>
<div class="a" style="left:843px;top:30px;width:242px;height:1px;background:#393739;"></div>
<div class="a" style="left:941px;top:69.5px;width:143px;height:1px;background:#373537;"></div>
<div class="a" style="left:843px;top:43.5px;width:98px;height:27.5px;background:#545355;"></div>
<div class="a" style="left:941px;top:43.5px;width:1px;height:26.5px;background:#3a383a;"></div>
<div class="a" style="left:1084px;top:30px;width:1px;height:697px;background:#444444;"></div>
<svg style="left:1053px;top:34.8px" width="9" height="7" viewBox="0 0 9 7"><path d="M4 0.5 L0.8 3.5 L4 6.5 Z M8.5 0.5 L5.3 3.5 L8.5 6.5 Z" fill="#d0d0d0"/></svg>
<svg style="left:1073.5px;top:34.8px" width="7" height="7" viewBox="0 0 7 7"><path d="M0.8 0.8 L6.2 6.2 M6.2 0.8 L0.8 6.2" stroke="#d6d6d6" stroke-width="1.8"/></svg>
<div class="t" style="left:852px;top:49.0px;font-size:9.94px;color:#f0f0f0;font-weight:bold;-webkit-text-stroke:0;">3D and Materials</div>
<div class="t" style="left:858.6px;top:87.5px;font-size:10.0px;color:#f0f0f0;letter-spacing:0.08px;">Object</div>
<div class="a" style="left:858px;top:103.5px;width:30px;height:1.5px;background:#f0f0f0;"></div>
<div class="t" style="left:913px;top:87.5px;font-size:9.86px;color:#e6e6e6;">Materials</div>
<div class="t" style="left:975px;top:87.5px;font-size:10.0px;color:#e6e6e6;letter-spacing:0.12px;">Lighting</div>
<svg style="left:0px;top:0px" width="1365" height="727" viewBox="0 0 1365 727"><path d="M1048 104.8 V99.5 L1054.5 96.5 L1058.5 92.5 L1061.9 91.4 V104.8 Z" fill="#6e6c6f"/><rect x="1048.5" y="93.2" width="1.8" height="1.8" fill="#6a686b"/><rect x="1052" y="92" width="1.8" height="1.8" fill="#6a686b"/><rect x="1055.5" y="92" width="1.8" height="1.8" fill="#6a686b"/><rect x="1048.5" y="96.3" width="1.8" height="1.8" fill="#6a686b"/><rect x="1052" y="95" width="1.8" height="1.8" fill="#6a686b"/></svg>
<svg style="left:1069px;top:94.7px" width="9" height="6" viewBox="0 0 9 6"><path d="M1 1 L4.5 4.5 L8 1" fill="none" stroke="#f0f0f0" stroke-width="1.7"/></svg>
<div class="t" style="left:853px;top:130.0px;font-size:9.71px;color:#e4e4e4;">3D Type</div>
<svg style="left:0px;top:0px" width="1365" height="727" viewBox="0 0 1365 727"><path d="M871 164.6 L887.2 160.6 V177 L871 180.6 Z" fill="#c2c2c2"/><path d="M921.3 163.2 L932.3 160.4 L941 166.4 V178.6 L929.6 181.4 L921.3 174.6 Z" fill="none" stroke="#c2c2c2" stroke-width="1.2" stroke-linejoin="round"/><path d="M929.6 169 L941 166.4 V178.6 L929.6 181.4 Z" fill="#c2c2c2"/><path d="M921.3 163.2 L929.6 169 M929.6 169 V181.4 M932.3 160.4 V171.5 L921.3 174.6 M932.3 171.5 L941 178.6 M921.3 163.2 L932.3 171.5" fill="none" stroke="#c2c2c2" stroke-width="1"/><path d="M975.6 165 C976.5 160.3 994 160.3 995 165 V175.5 C994 179 988 180 985 179.6 V168.6 L975.6 166.8 Z" fill="none" stroke="#c2c2c2" stroke-width="1.2" stroke-linejoin="round"/><path d="M975.6 166.5 L985 168.6 V178.2 L975.6 175.8 Z" fill="#c2c2c2"/><path d="M985 168.6 C989 169 993.5 167.8 995 165" fill="none" stroke="#c2c2c2" stroke-width="1.1"/><path d="M985.6 169.5 C987.5 169.7 990.5 169.3 991.5 168.3 V178.5 C990 179.4 987.5 179.6 985.6 179.3 Z" fill="#9a9a9a"/><g transform="rotate(22 1040.5 169)"><ellipse cx="1040.5" cy="168.6" rx="7.2" ry="8.4" fill="#c2c2c2"/><path d="M1040.5 176.5 L1042.6 180.6 H1038.4 Z" fill="#c2c2c2"/></g><path d="M1039 164 C1040 162.5 1042 162 1043.5 162.6" stroke="#9a9a9a" stroke-width="1" fill="none" stroke-dasharray="1 1"/></svg>
<div class="t" style="left:866px;top:192.8px;font-size:9.6px;color:#ececec;letter-spacing:-0.11px;">Plane</div>
<div class="t" style="left:915px;top:192.8px;font-size:9.87px;color:#ececec;">Extrude</div>
<div class="t" style="left:969px;top:192.8px;font-size:9.6px;color:#ececec;letter-spacing:-0.10px;">Revolve</div>
<div class="t" style="left:1024px;top:192.8px;font-size:10.0px;color:#ececec;letter-spacing:0.32px;">Inflate</div>
<div class="t" style="left:863.6px;top:237.0px;font-size:9.6px;color:#727272;letter-spacing:-0.40px;">Cap</div>
<div class="a" style="left:1009px;top:231px;width:50px;height:25px;background:transparent;border:1px solid #5e5e5e"></div>
<div class="a" style="left:1034px;top:231px;width:1px;height:25px;background:#5e5e5e;"></div>
<svg style="left:1014px;top:236px" width="16" height="16" viewBox="0 0 16 16"><circle cx="6.5" cy="7" r="5.8" fill="#6f6f6f"/><circle cx="9.5" cy="9" r="5.8" fill="#6a6a6a" stroke="#787878" stroke-width="0.8"/></svg>
<svg style="left:1038px;top:236px" width="16" height="16" viewBox="0 0 16 16"><circle cx="6.5" cy="7" r="5.8" fill="#6f6f6f"/><circle cx="9.5" cy="9" r="5.8" fill="#6a6a6a" stroke="#787878" stroke-width="0.8"/><circle cx="9.5" cy="9" r="2.6" fill="#585858"/></svg>
<div class="a" style="left:853px;top:268px;width:222px;height:1px;background:#4e4e4e;"></div>
<svg style="left:851px;top:293.5px" width="9" height="6" viewBox="0 0 9 6"><path d="M1 1 L4.5 4.5 L8 1" fill="none" stroke="#6a6a6a" stroke-width="1.3"/></svg>
<div class="t" style="left:864.5px;top:288.0px;font-size:9.6px;color:#727272;letter-spacing:-0.30px;">Bevel</div>
<div class="a" style="left:1033px;top:289px;width:26px;height:15px;background:#707070;border-radius:7.5px"></div>
<div class="a" style="left:1046.5px;top:290.5px;width:12px;height:12px;background:#5c5c5c;border-radius:50%"></div>
<div class="a" style="left:853px;top:321px;width:222px;height:1px;background:#4e4e4e;"></div>
<svg style="left:851px;top:346.5px" width="9" height="6" viewBox="0 0 9 6"><path d="M1 1 L4.5 4.5 L8 1" fill="none" stroke="#6a6a6a" stroke-width="1.3"/></svg>
<div class="t" style="left:864.5px;top:341.4px;font-size:9.6px;color:#727272;letter-spacing:-0.03px;">Rotation</div>
<div class="t" style="left:863.6px;top:384.0px;font-size:9.6px;color:#727272;letter-spacing:-0.21px;">Presets</div>
<div class="a" style="left:864px;top:405px;width:113px;height:21px;background:#595759;"></div>
<div class="t" style="left:870.5px;top:407.7px;font-size:9.6px;color:#6e6e6e;">Custom Rotation</div>
<svg style="left:962.5px;top:412.5px" width="9" height="6" viewBox="0 0 9 6"><path d="M1 1 L4.5 4.5 L8 1" fill="none" stroke="#6a6a6a" stroke-width="1.2"/></svg>
<div class="t" style="left:864px;top:436.3px;font-size:9.5px;color:#727272;">X</div>
<div class="a" style="left:872px;top:443.8px;width:111px;height:1px;background:#646464;"></div>
<div class="a" style="left:930.5px;top:438.8px;width:11px;height:11px;border-radius:50%;border:2px solid #7a787b;background:#545355"></div>
<div class="a" style="left:991.6px;top:433.8px;width:46.39999999999998px;height:21px;background:#595759;"></div>
<div class="t" style="left:995px;top:436.3px;font-size:9.5px;color:#6c6c6c;">33°</div>
<div class="t" style="left:864px;top:467.0px;font-size:9.5px;color:#727272;">Y</div>
<div class="a" style="left:872px;top:474.5px;width:111px;height:1px;background:#646464;"></div>
<div class="a" style="left:927.5px;top:469.5px;width:11px;height:11px;border-radius:50%;border:2px solid #7a787b;background:#545355"></div>
<div class="a" style="left:991.6px;top:464.5px;width:46.39999999999998px;height:21px;background:#595759;"></div>
<div class="t" style="left:995px;top:467.0px;font-size:9.5px;color:#6c6c6c;">23°</div>
<div class="t" style="left:864px;top:496.5px;font-size:9.5px;color:#727272;">Z</div>
<div class="a" style="left:872px;top:504.0px;width:111px;height:1px;background:#646464;"></div>
<div class="a" style="left:925.5px;top:499.0px;width:11px;height:11px;border-radius:50%;border:2px solid #7a787b;background:#545355"></div>
<div class="a" style="left:991.6px;top:494.0px;width:46.39999999999998px;height:21px;background:#595759;"></div>
<div class="t" style="left:995px;top:496.5px;font-size:9.5px;color:#6c6c6c;">15°</div>
<div class="t" style="left:863.4px;top:525.4px;font-size:9.6px;color:#727272;letter-spacing:-0.05px;">Perspective</div>
<div class="a" style="left:880px;top:556.8px;width:123px;height:1px;background:#646464;"></div>
<div class="a" style="left:869px;top:551.8px;width:11px;height:11px;border-radius:50%;border:2px solid #7a787b;background:#545355"></div>
<div class="a" style="left:1008px;top:546px;width:51px;height:21px;background:#595759;"></div>
<div class="t" style="left:1015px;top:548.0px;font-size:9.5px;color:#6c6c6c;">0°</div>
<div class="a" style="left:853px;top:582.5px;width:222px;height:1px;background:#4e4e4e;"></div>
<div class="t" style="left:863.4px;top:597.4px;font-size:9.77px;color:#727272;">Quick Actions</div>
<div class="a" style="left:863.4px;top:624.4px;width:116.6px;height:19px;background:#595759;border-radius:2px"></div>
<div class="t" style="left:873px;top:625.7px;font-size:9.79px;color:#6e6e6e;">Expand as wireframes</div>
<div class="a" style="left:863.4px;top:653.5px;width:100.6px;height:19px;background:#595759;border-radius:2px"></div>
<div class="t" style="left:873px;top:654.9px;font-size:9.73px;color:#6e6e6e;">Export 3D object...</div>
<div class="a" style="left:849px;top:720.5px;width:13px;height:13px;border-radius:50%;border:1.6px solid #f0f0f0"></div>
<div class="t" style="left:872px;top:720.0px;font-size:9.6px;color:#f4f4f4;font-weight:bold;-webkit-text-stroke:0;letter-spacing:-0.43px;">Share feedback</div>
<!-- p80_strip -->
<div class="a" style="left:1085px;top:31px;width:280px;height:33px;background:#504e51;"></div>
<div class="a" style="left:1085.2px;top:46px;width:1.2px;height:5px;background:#c4c4c4;"></div>
<div class="a" style="left:1085px;top:64px;width:280px;height:13px;background:#424242;"></div>
<svg style="left:1097px;top:67.5px" width="9" height="7" viewBox="0 0 9 7"><path d="M4 0.5 L0.8 3.5 L4 6.5 Z M8.5 0.5 L5.3 3.5 L8.5 6.5 Z" fill="#d0d0d0"/></svg>
<svg style="left:1350px;top:67.5px" width="9" height="7" viewBox="0 0 9 7"><path d="M0.5 0.5 L3.7 3.5 L0.5 6.5 Z M5 0.5 L8.2 3.5 L5 6.5 Z" fill="#d0d0d0"/></svg>
<div class="a" style="left:1085px;top:77px;width:26px;height:650px;background:#535353;"></div>
<div class="a" style="left:1111px;top:77px;width:2.5px;height:650px;background:#3f3f3f;"></div>
<div class="a" style="left:1084px;top:64px;width:1.5px;height:663px;background:#3f3f3f;"></div>
<div class="a" style="left:1085px;top:145px;width:25px;height:1px;background:#3c3c3c;"></div>
<div class="a" style="left:1085px;top:240px;width:25px;height:1px;background:#3c3c3c;"></div>
<div class="a" style="left:1085px;top:339px;width:25px;height:1px;background:#3c3c3c;"></div>
<div class="a" style="left:1085px;top:408px;width:25px;height:1px;background:#3c3c3c;"></div>
<div class="a" style="left:1085px;top:505.5px;width:25px;height:1px;background:#3c3c3c;"></div>
<div class="a" style="left:1085px;top:546.5px;width:25px;height:1px;background:#3c3c3c;"></div>
<div class="a" style="left:1087px;top:79px;width:14px;height:4px;background:repeating-linear-gradient(to right,#3c3c3c 0,#3c3c3c 1px,transparent 1px,transparent 2px);"></div>
<div class="a" style="left:1087px;top:150px;width:14px;height:4px;background:repeating-linear-gradient(to right,#3c3c3c 0,#3c3c3c 1px,transparent 1px,transparent 2px);"></div>
<div class="a" style="left:1087px;top:247px;width:14px;height:4px;background:repeating-linear-gradient(to right,#3c3c3c 0,#3c3c3c 1px,transparent 1px,transparent 2px);"></div>
<div class="a" style="left:1087px;top:344px;width:14px;height:4px;background:repeating-linear-gradient(to right,#3c3c3c 0,#3c3c3c 1px,transparent 1px,transparent 2px);"></div>
<div class="a" style="left:1087px;top:413px;width:14px;height:4px;background:repeating-linear-gradient(to right,#3c3c3c 0,#3c3c3c 1px,transparent 1px,transparent 2px);"></div>
<div class="a" style="left:1087px;top:510px;width:14px;height:4px;background:repeating-linear-gradient(to right,#3c3c3c 0,#3c3c3c 1px,transparent 1px,transparent 2px);"></div>
<div class="a" style="left:1086px;top:215px;width:19.5px;height:24px;background:#2f2f2f;"></div>
<svg style="left:0px;top:0px" width="1365" height="727" viewBox="0 0 1365 727"><path d="M1094.5 95 C1099.5 95 1103.3 97.8 1103.3 101 C1103.3 103.5 1101 104.2 1099.3 103.7 C1097.6 103.2 1096.6 104.3 1097.2 105.6 C1097.8 107 1096.5 107.8 1094 107.8 C1089 107.8 1085.2 105 1085.2 101.3 C1085.2 97.8 1089.2 95 1094.5 95 Z" fill="#cdcdcd"/><circle cx="1088.6" cy="101.8" r="1.35" fill="#535353"/><circle cx="1091" cy="98" r="1.35" fill="#535353"/><circle cx="1095.3" cy="97" r="1.35" fill="#535353"/><circle cx="1099.3" cy="99.2" r="1.35" fill="#535353"/><circle cx="1092.5" cy="105" r="1.35" fill="#535353"/><defs><linearGradient id="cg" x1="0" x2="1" y1="1" y2="0"><stop offset="0" stop-color="#e8e8e8"/><stop offset="0.45" stop-color="#8a8a8a"/><stop offset="1" stop-color="#2c2c2c"/></linearGradient></defs><path d="M1086.7 120.8 V136 H1101.8 C1101.8 127.5 1095 120.8 1086.7 120.8 Z" fill="url(#cg)" stroke="#cdcdcd" stroke-width="1.1"/><path d="M1086.7 120.5 V136.3" stroke="#e8e8e8" stroke-width="1.6"/><path d="M1086.7 136 L1100.1 130.6" stroke="#d0d0d0" stroke-width="0.7" opacity="0.6"/><path d="M1086.7 136 L1097.0 125.7" stroke="#d0d0d0" stroke-width="0.7" opacity="0.6"/><path d="M1086.7 136 L1092.1 122.6" stroke="#d0d0d0" stroke-width="0.7" opacity="0.6"/><rect x="1085.8" y="164" width="16" height="11.5" fill="#cdcdcd"/><rect x="1087.3" y="165.6" width="3.4" height="3.4" fill="#7a7a7a"/><rect x="1087.3" y="170.6" width="3.4" height="3.4" fill="#9a9a9a"/><rect x="1092.3" y="165.6" width="3.4" height="3.4" fill="#9a9a9a"/><rect x="1092.3" y="170.6" width="3.4" height="3.4" fill="#7a7a7a"/><rect x="1097.3" y="165.6" width="3.4" height="3.4" fill="#7a7a7a"/><rect x="1097.3" y="170.6" width="3.4" height="3.4" fill="#9a9a9a"/><path d="M1088.5 198.5 H1099.5 V207 H1088.5 Z" fill="#cdcdcd"/><path d="M1091 198 L1089 190 L1091.5 188 L1093.5 198 Z M1094 198 L1094 187.5 L1096 187 L1096.5 198 Z M1097 198 L1099.5 191 L1102 192 L1099 198 Z" fill="#cdcdcd"/><circle cx="1090" cy="190" r="1.8" fill="#cdcdcd"/><circle cx="1100.8" cy="191" r="1.8" fill="#cdcdcd"/><circle cx="1094.5" cy="222" r="3.6" fill="#cdcdcd"/><circle cx="1090.6" cy="227.5" r="3.6" fill="#cdcdcd"/><circle cx="1098.4" cy="227.5" r="3.6" fill="#cdcdcd"/><path d="M1093.7 226 H1095.3 L1095.8 233 L1098 234.6 H1091 L1093.2 233 Z" fill="#cdcdcd"/><rect x="1085.5" y="260.3" width="16.5" height="1.2" fill="#cdcdcd"/><rect x="1085.5" y="264" width="16.5" height="2.4" fill="#cdcdcd"/><rect x="1085.5" y="269" width="16.5" height="3.4" fill="#cdcdcd"/><defs><linearGradient id="gr" x1="0" x2="1" y1="0" y2="0"><stop offset="0" stop-color="#222"/><stop offset="1" stop-color="#ddd"/></linearGradient></defs><rect x="1085.8" y="288.5" width="16" height="11" fill="url(#gr)" stroke="#cdcdcd" stroke-width="1.3"/><circle cx="1091" cy="320" r="6" fill="#bdbdbd"/><circle cx="1095.5" cy="325.5" r="6.3" fill="#8a8a8a" stroke="#b5b5b5" stroke-width="1"/><circle cx="1094" cy="363.7" r="5.8" fill="#c6c6c6"/><circle cx="1094" cy="363.7" r="8.3" fill="none" stroke="#cdcdcd" stroke-width="1.6" stroke-dasharray="2 1.8"/><rect x="1088.5" y="384.8" width="13.5" height="13" fill="none" stroke="#cdcdcd" stroke-width="1.3"/><rect x="1085.5" y="392" width="6" height="6.5" fill="#535353" stroke="#cdcdcd" stroke-width="1.2"/><rect x="1087" y="393.5" width="3" height="3" fill="#8a8a8a"/><path d="M1094 424.5 L1102.3 429 L1094 433.5 L1085.7 429 Z" fill="#cdcdcd"/><path d="M1086.5 433.5 L1094 437.8 L1101.5 433.5" fill="none" stroke="#cdcdcd" stroke-width="2"/><path d="M1092.5 455 H1086.6 V467.5 H1099 V461.5" fill="none" stroke="#cdcdcd" stroke-width="1.9"/><path d="M1094.5 453 H1102 V460.5 M1102 453 L1094.5 460.5" fill="none" stroke="#cdcdcd" stroke-width="1.9"/><path d="M1085.5 480.3 H1093.5 V486.5 M1085.5 480.3 V488.5 H1088" fill="none" stroke="#cdcdcd" stroke-width="1.2"/><rect x="1088.6" y="487" width="14" height="9" fill="none" stroke="#cdcdcd" stroke-width="1.3"/><path d="M1086.5 521.3 H1101.5 Q1102.8 521.3 1102.8 522.6 V531.5 Q1102.8 532.8 1101.5 532.8 H1092 L1088.2 537.5 V532.8 H1086.5 Q1085.2 532.8 1085.2 531.5 V522.6 Q1085.2 521.3 1086.5 521.3 Z" fill="#cdcdcd"/></svg>
<svg style="left:0px;top:0px" width="1365" height="727" viewBox="0 0 1365 727"><rect x="1109" y="44.6" width="6.6" height="5" fill="#6a6a6a" stroke="#cdcdcd" stroke-width="1.1"/><path d="M1104 40 L1106.9 42.7" stroke="#cdcdcd" stroke-width="1.3"/><path d="M1107.5 43.300000000000004 L1104.3000000000002 43.300000000000004 L1107.5 40.1 Z" fill="#cdcdcd"/><path d="M1120.4 40 L1117.5 42.7" stroke="#cdcdcd" stroke-width="1.3"/><path d="M1116.9 43.300000000000004 L1120.1 43.300000000000004 L1116.9 40.1 Z" fill="#cdcdcd"/><path d="M1104 54.2 L1106.9 51.5" stroke="#cdcdcd" stroke-width="1.3"/><path d="M1107.5 50.9 L1104.3000000000002 50.9 L1107.5 54.1 Z" fill="#cdcdcd"/><path d="M1120.4 54.2 L1117.5 51.5" stroke="#cdcdcd" stroke-width="1.3"/><path d="M1116.9 50.9 L1120.1 50.9 L1116.9 54.1 Z" fill="#cdcdcd"/><rect x="1135.5" y="44.6" width="6.6" height="6.2" fill="#6a6a6a" stroke="#cdcdcd" stroke-width="1.1"/><rect x="1144.2" y="39.8" width="6.6" height="6.4" fill="#6a6a6a" stroke="#cdcdcd" stroke-width="1.1"/><rect x="1134" y="43" width="1.8" height="1.8" fill="#cdcdcd"/><rect x="1134" y="50" width="1.8" height="1.8" fill="#cdcdcd"/><rect x="1142.8" y="38.2" width="1.8" height="1.8" fill="#cdcdcd"/><rect x="1150" y="38.2" width="1.8" height="1.8" fill="#cdcdcd"/><rect x="1150" y="45.5" width="1.8" height="1.8" fill="#cdcdcd"/><path d="M1141.8 44.6 L1150.6 52.3 L1146 52.8 L1141.8 57.4 Z" fill="#cdcdcd"/><rect x="1185" y="44.6" width="6.6" height="6.2" fill="#6a6a6a" stroke="#cdcdcd" stroke-width="1.1"/><rect x="1193.2" y="39.8" width="6.6" height="6.4" fill="#6a6a6a" stroke="#cdcdcd" stroke-width="1.1"/><rect x="1183.5" y="43" width="1.8" height="1.8" fill="#cdcdcd"/><rect x="1183.5" y="50" width="1.8" height="1.8" fill="#cdcdcd"/><rect x="1191.6" y="38.2" width="1.8" height="1.8" fill="#cdcdcd"/><rect x="1199" y="38.2" width="1.8" height="1.8" fill="#cdcdcd"/><path d="M1189.2 55 L1190.4 51 L1197.2 44.2 C1198.2 43.2 1201 46 1200 47 L1193.2 53.8 Z" fill="#cdcdcd"/><rect x="1262" y="40.5" width="5.3" height="5.6" fill="#cdcdcd"/><rect x="1269" y="40.5" width="5.3" height="5.6" fill="#cdcdcd"/><rect x="1262" y="48" width="5.3" height="5.6" fill="#cdcdcd"/><rect x="1269" y="48" width="5.3" height="5.6" fill="#cdcdcd"/><path d="M1268.2 39 V56 M1260.5 47 H1276" stroke="#8a8a8a" stroke-width="0.8"/><rect x="1287.5" y="40.5" width="3.8" height="3.8" fill="#cdcdcd"/><rect x="1287.5" y="45.8" width="3.8" height="3.8" fill="#cdcdcd"/><rect x="1287.5" y="51" width="3.8" height="3.8" fill="#cdcdcd"/><path d="M1293 44 H1296.8 C1299.4 44 1300.4 45.6 1300.4 47.2 C1300.4 48.8 1299.4 50.4 1296.8 50.4 H1293" fill="none" stroke="#cdcdcd" stroke-width="2.3"/><rect x="1336.5" y="42.5" width="2" height="2" fill="#cdcdcd"/><rect x="1340" y="42.7" width="8.5" height="1.6" fill="#cdcdcd"/><rect x="1336.5" y="46.7" width="2" height="2" fill="#cdcdcd"/><rect x="1340" y="46.900000000000006" width="8.5" height="1.6" fill="#cdcdcd"/><rect x="1336.5" y="51" width="2" height="2" fill="#cdcdcd"/><rect x="1340" y="51.2" width="8.5" height="1.6" fill="#cdcdcd"/></svg>
<svg style="left:1157px;top:43.8px" width="9" height="6" viewBox="0 0 9 6"><path d="M1 1 L4.5 4.5 L8 1" fill="none" stroke="#f0f0f0" stroke-width="1.7"/></svg>
<svg style="left:1211.3px;top:43.8px" width="9" height="6" viewBox="0 0 9 6"><path d="M1 1 L4.5 4.5 L8 1" fill="none" stroke="#f0f0f0" stroke-width="1.7"/></svg>
<svg style="left:1309px;top:44.5px" width="9" height="6" viewBox="0 0 9 6"><path d="M1 1 L4.5 4.5 L8 1" fill="none" stroke="#646464" stroke-width="1.5"/></svg>
<div class="a" style="left:1174px;top:36px;width:1px;height:24px;background:#4a4a4a;"></div>
<!-- p90_props -->
<div class="a" style="left:1113.5px;top:77px;width:252px;height:650px;background:#545354;"></div>
<div class="a" style="left:1113.5px;top:77px;width:252px;height:27px;background:#424242;"></div>
<div class="a" style="left:1113.5px;top:77px;width:66.5px;height:27px;background:#545354;"></div>
<div class="a" style="left:1180px;top:77px;width:1px;height:26px;background:#383638;"></div>
<div class="a" style="left:1181px;top:78px;width:57px;height:25px;background:#4a484b;"></div>
<div class="a" style="left:1238px;top:77px;width:1px;height:26px;background:#383638;"></div>
<div class="a" style="left:1180px;top:102.5px;width:185px;height:1px;background:#383638;"></div>
<div class="t" style="left:1123px;top:81.5px;font-size:9.6px;color:#f4f4f4;font-weight:bold;-webkit-text-stroke:0;letter-spacing:-0.05px;">Properties</div>
<div class="t" style="left:1189.6px;top:81.7px;font-size:10.0px;color:#c4c4c4;letter-spacing:0.09px;">Libraries</div>
<div class="t" style="left:1124px;top:113.5px;font-size:9.6px;color:#dedede;letter-spacing:-0.03px;">Rectangle</div>
<div class="a" style="left:1124px;top:138px;width:227px;height:1px;background:#4b4b4b;"></div>
<div class="t" style="left:1124px;top:147.5px;font-size:9.74px;color:#dedede;">Transform</div>
<svg style="left:0px;top:0px" width="1365" height="727" viewBox="0 0 1365 727"><rect x="1124.5" y="182.5" width="4.4" height="4.4" fill="none" stroke="#cdcdcd" stroke-width="1"/><rect x="1124.5" y="189.7" width="4.4" height="4.4" fill="none" stroke="#cdcdcd" stroke-width="1"/><rect x="1124.5" y="196.9" width="4.4" height="4.4" fill="none" stroke="#cdcdcd" stroke-width="1"/><rect x="1131.9" y="182.5" width="4.4" height="4.4" fill="none" stroke="#cdcdcd" stroke-width="1"/><rect x="1131.9" y="189.7" width="4.4" height="4.4" fill="#f0f0f0" stroke="#cdcdcd" stroke-width="1"/><rect x="1131.9" y="196.9" width="4.4" height="4.4" fill="none" stroke="#cdcdcd" stroke-width="1"/><rect x="1139.3" y="182.5" width="4.4" height="4.4" fill="none" stroke="#cdcdcd" stroke-width="1"/><rect x="1139.3" y="189.7" width="4.4" height="4.4" fill="none" stroke="#cdcdcd" stroke-width="1"/><rect x="1139.3" y="196.9" width="4.4" height="4.4" fill="none" stroke="#cdcdcd" stroke-width="1"/><path d="M1128.9 184.7 H1131.9 M1136.3 184.7 H1139.3" stroke="#cdcdcd" stroke-width="1"/><path d="M1128.9 191.89999999999998 H1131.9 M1136.3 191.89999999999998 H1139.3" stroke="#cdcdcd" stroke-width="1"/><path d="M1128.9 199.1 H1131.9 M1136.3 199.1 H1139.3" stroke="#cdcdcd" stroke-width="1"/><path d="M1126.7 186.9 V189.7 M1126.7 194.1 V196.9" stroke="#cdcdcd" stroke-width="1"/><path d="M1134.1000000000001 186.9 V189.7 M1134.1000000000001 194.1 V196.9" stroke="#cdcdcd" stroke-width="1"/><path d="M1141.5 186.9 V189.7 M1141.5 194.1 V196.9" stroke="#cdcdcd" stroke-width="1"/></svg>
<div class="t" style="left:1154px;top:171.0px;font-size:9.6px;color:#c8c8c8;font-weight:bold;-webkit-text-stroke:0;letter-spacing:-0.30px;">X:</div>
<div class="inp" style="left:1169px;top:169px;width:54px;height:19px"></div><div class="t" style="left:1174px;top:170.0px;font-size:9.64px;color:#ececec;">489.8 px</div>
<div class="t" style="left:1240px;top:171.0px;font-size:9.6px;color:#c8c8c8;font-weight:bold;-webkit-text-stroke:0;letter-spacing:-0.29px;">W:</div>
<div class="inp" style="left:1258px;top:169px;width:54px;height:19px"></div><div class="t" style="left:1263px;top:170.0px;font-size:9.79px;color:#ececec;">420.48 px</div>
<div class="t" style="left:1154px;top:197.5px;font-size:9.72px;color:#c8c8c8;font-weight:bold;-webkit-text-stroke:0;">Y:</div>
<div class="inp" style="left:1169px;top:195px;width:54px;height:19px"></div><div class="t" style="left:1174px;top:196.0px;font-size:9.6px;color:#ececec;letter-spacing:-0.02px;">291.32 px</div>
<div class="t" style="left:1240px;top:197.5px;font-size:9.6px;color:#c8c8c8;font-weight:bold;-webkit-text-stroke:0;letter-spacing:-0.07px;">H:</div>
<div class="inp" style="left:1258px;top:195px;width:54px;height:19px"></div><div class="t" style="left:1263px;top:196.0px;font-size:9.79px;color:#ececec;">420.48 px</div>
<svg style="left:0px;top:0px" width="1365" height="727" viewBox="0 0 1365 727"><rect x="1331.3" y="184.2" width="7" height="15.2" rx="3.5" fill="none" stroke="#c4c4c4" stroke-width="1.6"/><rect x="1329" y="190.3" width="12" height="3" fill="#545354"/><path d="M1327.6 184.4 L1342.6 199" stroke="#c4c4c4" stroke-width="1.4"/></svg>
<svg style="left:1149px;top:224px" width="14" height="10" viewBox="0 0 14 10"><path d="M0.8 8.5 L7.8 1 M0.8 8.5 H10.5" fill="none" stroke="#c4c4c4" stroke-width="1.3"/><path d="M4.5 4.8 C6.5 5.5 7.3 7 7.2 8.5" fill="none" stroke="#c4c4c4" stroke-width="1"/><rect x="12" y="3.5" width="1.3" height="1.3" fill="#c4c4c4"/><rect x="12" y="7.5" width="1.3" height="1.3" fill="#c4c4c4"/></svg>
<div class="inp" style="left:1167px;top:221.5px;width:36px;height:18.5px"></div><div class="t" style="left:1170px;top:222.0px;font-size:10.4px;color:#ececec;">0°</div>
<div class="dd" style="left:1204px;top:221.5px;width:16.5px;height:18.5px"></div><svg style="left:1207.5px;top:228px" width="9" height="6" viewBox="0 0 9 6"><path d="M1 1 L4.5 4.5 L8 1" fill="none" stroke="#e8e8e8" stroke-width="1.6"/></svg>
<svg style="left:1265px;top:225px" width="14" height="13" viewBox="0 0 14 13"><path d="M0.7 1 L5 6.5 L0.7 12 Z" fill="none" stroke="#c4c4c4" stroke-width="1.1"/><path d="M7 0 V13" stroke="#c4c4c4" stroke-width="1" stroke-dasharray="1 1"/><path d="M13.5 0.5 L8.8 6.5 L13.5 12.5 Z" fill="#c4c4c4"/></svg>
<svg style="left:1289px;top:224px" width="13" height="15" viewBox="0 0 13 15"><path d="M0.5 0.5 L6.5 5.5 L12.5 0.5 Z" fill="#c4c4c4"/><path d="M0 7.5 H13" stroke="#c4c4c4" stroke-width="1" stroke-dasharray="1 1"/><path d="M1.5 14.3 L6.5 10 L11.5 14.3 Z" fill="none" stroke="#c4c4c4" stroke-width="1.1"/></svg>
<div class="a" style="left:1331.5px;top:250.3px;width:3.2px;height:3.2px;background:#c6c6c6;border-radius:50%"></div>
<div class="a" style="left:1336.8px;top:250.3px;width:3.2px;height:3.2px;background:#c6c6c6;border-radius:50%"></div>
<div class="a" style="left:1342.1px;top:250.3px;width:3.2px;height:3.2px;background:#c6c6c6;border-radius:50%"></div>
<div class="a" style="left:1124px;top:262px;width:227px;height:1px;background:#4b4b4b;"></div>
<div class="t" style="left:1124px;top:272.7px;font-size:9.6px;color:#dedede;letter-spacing:-0.08px;">Appearance</div>
<div class="a" style="left:1124.5px;top:300px;width:17px;height:17px;background:#8d54a5;border:1px solid #f0f0f0"></div>
<div class="t" style="left:1154px;top:301.0px;font-size:9.6px;color:#dedede;letter-spacing:-0.07px;">Fill</div>
<div class="a" style="left:1124.5px;top:328px;width:17px;height:18px;background:#fff;border:1px solid #e8e8e8"></div>
<svg style="left:1124.5px;top:328px" width="17" height="18" viewBox="0 0 17 18"><rect x="5" y="5.5" width="7" height="7" fill="#333"/><path d="M1 17 L16 1" stroke="#e21a23" stroke-width="2"/></svg>
<div class="t" style="left:1154px;top:330.0px;font-size:9.6px;color:#eaeaea;font-weight:bold;-webkit-text-stroke:0;letter-spacing:-0.31px;border-bottom:1px dotted #c0c0c0;height:14.5px;line-height:16px;">Stroke</div>
<div class="dd" style="left:1206px;top:327px;width:15px;height:19px;background:#4d4d4d"></div><svg style="left:1209px;top:329px" width="9" height="15" viewBox="0 0 9 15"><path d="M1 5 L4.5 1.5 L8 5 M1 10 L4.5 13.5 L8 10" fill="none" stroke="#e8e8e8" stroke-width="1.4"/></svg>
<div class="inp" style="left:1222px;top:327px;width:30.5px;height:19px"></div><div class="dd" style="left:1253.5px;top:327px;width:17.5px;height:19px"></div><svg style="left:1257.5px;top:333.5px" width="9" height="6" viewBox="0 0 9 6"><path d="M1 1 L4.5 4.5 L8 1" fill="none" stroke="#e8e8e8" stroke-width="1.6"/></svg>
<svg style="left:1124.5px;top:358px" width="17" height="17" viewBox="0 0 17 17"><rect x="1" y="1" width="5" height="5" fill="#6c6c6c"/><rect x="1" y="11" width="5" height="5" fill="#6c6c6c"/><rect x="6" y="6" width="5" height="5" fill="#6c6c6c"/><rect x="11" y="1" width="5" height="5" fill="#6c6c6c"/><rect x="11" y="11" width="5" height="5" fill="#6c6c6c"/><rect x="0.5" y="0.5" width="16" height="16" fill="none" stroke="#a8a8a8" stroke-width="1"/></svg>
<div class="t" style="left:1154px;top:358.5px;font-size:9.6px;color:#eaeaea;font-weight:bold;-webkit-text-stroke:0;letter-spacing:-0.32px;border-bottom:1px dotted #c0c0c0;height:15px;line-height:16px;">Opacity</div>
<div class="inp" style="left:1203.5px;top:357px;width:49px;height:18px"></div><div class="t" style="left:1207px;top:358.0px;font-size:9.77px;color:#ececec;">100%</div>
<div class="dd" style="left:1253.5px;top:357px;width:17.5px;height:18px"></div><svg style="left:1259.5px;top:361.5px" width="6" height="10" viewBox="0 0 6 10"><path d="M1 1 L4.8 5 L1 9" fill="none" stroke="#e8e8e8" stroke-width="1.6"/></svg>
<div class="t" style="left:1130.5px;top:391.5px;font-size:13px;color:#c8c8c8;font-style:italic;">fx</div>
<div class="a" style="left:1142px;top:404px;width:2px;height:2px;background:#c8c8c8;"></div>
<div class="a" style="left:1331.5px;top:422.3px;width:3.2px;height:3.2px;background:#c6c6c6;border-radius:50%"></div>
<div class="a" style="left:1336.8px;top:422.3px;width:3.2px;height:3.2px;background:#c6c6c6;border-radius:50%"></div>
<div class="a" style="left:1342.1px;top:422.3px;width:3.2px;height:3.2px;background:#c6c6c6;border-radius:50%"></div>
<div class="a" style="left:1124px;top:434px;width:227px;height:1px;background:#4b4b4b;"></div>
<div class="t" style="left:1124px;top:444.7px;font-size:9.89px;color:#dedede;">Align</div>
<svg style="left:0px;top:0px" width="1365" height="727" viewBox="0 0 1365 727"><path d="M1130.5 474 V478 M1127 477.5 H1131" stroke="#bdbdbd" stroke-width="1" stroke-dasharray="1 1"/><path d="M1131.5 478.5 H1138 L1141.5 482 V490.5 H1131.5 Z" fill="#6f6f6f" stroke="#cdcdcd" stroke-width="1.2"/><path d="M1144.5 481.5 L1147.5 484.5 L1150.5 481.5" fill="none" stroke="#cdcdcd" stroke-width="1.3"/><path d="M1165 474 V492" stroke="#cdcdcd" stroke-width="1.3"/><rect x="1167" y="476.5" width="8" height="5.5" fill="#cdcdcd"/><rect x="1167" y="484.5" width="13" height="5.5" fill="#cdcdcd"/><path d="M1202.5 474 V492" stroke="#cdcdcd" stroke-width="1.3"/><rect x="1198.5" y="476.5" width="8" height="5.5" fill="#cdcdcd"/><rect x="1196" y="484.5" width="13" height="5.5" fill="#cdcdcd"/><path d="M1240.5 474 V492" stroke="#cdcdcd" stroke-width="1.3"/><rect x="1230.5" y="476.5" width="8" height="5.5" fill="#cdcdcd"/><rect x="1225.5" y="484.5" width="13" height="5.5" fill="#cdcdcd"/><path d="M1254 475.5 H1272" stroke="#cdcdcd" stroke-width="1.3"/><rect x="1257.5" y="477.5" width="5.5" height="13" fill="#cdcdcd"/><rect x="1265" y="477.5" width="5.5" height="8" fill="#cdcdcd"/><path d="M1284 483.5 H1302" stroke="#cdcdcd" stroke-width="1.3"/><rect x="1287.5" y="477" width="5.5" height="13" fill="#cdcdcd"/><rect x="1295" y="479.5" width="5.5" height="8" fill="#cdcdcd"/><path d="M1313.5 491.5 H1332" stroke="#cdcdcd" stroke-width="1.3"/><rect x="1317" y="476.5" width="5.5" height="13" fill="#cdcdcd"/><rect x="1324.5" y="481.5" width="5.5" height="8" fill="#cdcdcd"/></svg>
<div class="a" style="left:1331.5px;top:507.3px;width:3.2px;height:3.2px;background:#c6c6c6;border-radius:50%"></div>
<div class="a" style="left:1336.8px;top:507.3px;width:3.2px;height:3.2px;background:#c6c6c6;border-radius:50%"></div>
<div class="a" style="left:1342.1px;top:507.3px;width:3.2px;height:3.2px;background:#c6c6c6;border-radius:50%"></div>
<div class="a" style="left:1124px;top:519px;width:227px;height:1px;background:#4b4b4b;"></div>
<div class="t" style="left:1124px;top:533.8px;font-size:9.74px;color:#dedede;">Quick Actions</div>
<div class="a" style="left:1124px;top:558.5px;width:107px;height:21.5px;background:transparent;border:1px solid #7a7a7a;border-radius:2px"></div>
<div class="t" style="left:1124px;width:107px;text-align:center;top:562.3px;font-size:10px;color:#f2f2f2;">Offset Path</div>
<div class="a" style="left:1241px;top:558.5px;width:110px;height:21.5px;background:transparent;border:1px solid #7a7a7a;border-radius:2px"></div>
<div class="t" style="left:1241px;width:110px;text-align:center;top:562.3px;font-size:10px;color:#f2f2f2;">Expand Shape</div>
<div class="a" style="left:1124px;top:590px;width:227px;height:21px;background:transparent;border:1px solid #7a7a7a;border-radius:2px"></div>
<div class="t" style="left:1124px;width:227px;text-align:center;top:593.8px;font-size:10px;color:#f2f2f2;">Arrange</div>
<div class="a" style="left:1124px;top:621px;width:227px;height:21px;background:transparent;border:1px solid #7a7a7a;border-radius:2px"></div>
<div class="t" style="left:1124px;width:227px;text-align:center;top:624.8px;font-size:10px;color:#f2f2f2;">Recolor</div>
<div class="a" style="left:1124px;top:652px;width:204px;height:21px;background:transparent;border:1px solid #6c6a6c;border-radius:2px"></div>
<div class="t" style="left:1124px;width:204px;text-align:center;top:655.6px;font-size:10px;color:#f2f2f2;">Start Global Edit</div>
<div class="a" style="left:1330px;top:652px;width:21px;height:21px;background:transparent;border:1px solid #6c6a6c;border-radius:2px"></div>
<svg style="left:1336px;top:660px" width="9" height="6" viewBox="0 0 9 6"><path d="M1 1 L4.5 4.5 L8 1" fill="none" stroke="#c8c8c8" stroke-width="1.3"/></svg>
<!-- p95_overlay -->
<svg style="left:0;top:0" width="1365" height="727" viewBox="0 0 1365 727"><defs><filter id="sh" x="-5%" y="-5%" width="110%" height="110%"><feDropShadow dx="1" dy="1.5" stdDeviation="1.2" flood-color="#000" flood-opacity="0.45"/></filter></defs><g filter="url(#sh)"><path d="M552 445 L224 216.5" stroke="#de2430" stroke-width="1.15" fill="none" opacity="0.9"/><path d="M216 211 L228.5 214.5 L223.5 222 Z" fill="#ee1c24"/></g></svg>
<div class="t" style="left:566px;top:446px;height:18px;line-height:18px;font-size:14.83px;font-weight:bold;color:#d5121a;-webkit-text-stroke:0;text-shadow:-1px -1px 0 #fff3f0,1px -1px 0 #fff3f0,-1px 1px 0 #fff3f0,1px 1px 0 #fff3f0,0 -1.5px 0 #fff3f0,0 1.5px 0 #fff3f0,-1.5px 0 0 #fff3f0,1.5px 0 0 #fff3f0,0 0 2px #fff,2px 3px 2.5px rgba(0,0,0,.5)">Công cụ vẽ hình vuông</div>
<svg style="left:177px;top:206px" width="12" height="19" viewBox="0 0 12 19"><path d="M0.7 0.8 V14.6 L4 11.6 L6.5 17.6 L8.9 16.6 L6.4 10.8 H10.8 Z" fill="#fff" stroke="#111" stroke-width="1"/></svg>
<div class="t" style="left:1072px;top:654.7px;font-size:19.72px;color:rgba(255,255,255,0.36);height:24px;line-height:24px;margin-top:-4px;-webkit-text-stroke:0;">Activate Windows</div>
<div class="t" style="left:1072px;top:676.6px;font-size:14.95px;color:rgba(255,255,255,0.36);height:20px;line-height:20px;margin-top:-2px;-webkit-text-stroke:0;">Go to Settings to activate Windows.</div>
</body>
</html>
